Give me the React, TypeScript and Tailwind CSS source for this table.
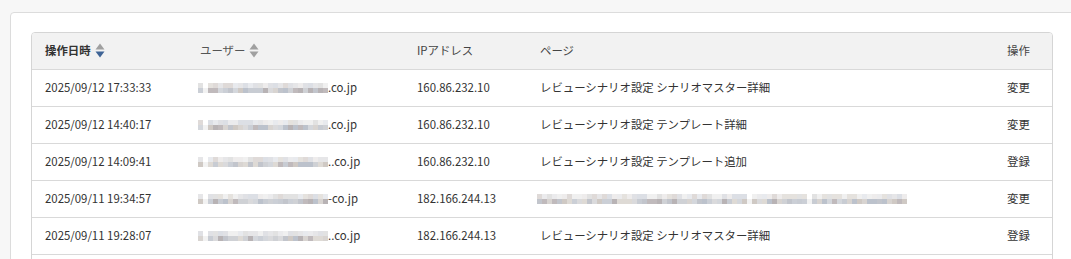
import React from "react";

const FONT = '"Noto Sans CJK JP", "Noto Sans", sans-serif';

const darkPal = ["#cfd1d5", "#c2c5cc", "#d8d4d1", "#b8b3b5", "#cbcfd6", "#dedad5", "#c8ccd3", "#d4d7dc", "#c0babc", "#dadadc", "#bcc2cc", "#cfc9c4"];
const lightPal = ["#e6e6e8", "#ebebed", "#e0e1e5", "#e5e2de", "#dcdfe5", "#eeecec", "#e2e2e2", "#e8eaee", "#dfdad8", "#f0f0f0"];

function rng(seed: number) {
  let s = seed;
  return () => {
    s = (s * 1103515245 + 12345) % 2147483648;
    return s / 2147483648;
  };
}

function Mosaic({ blocks, seed, gaps = [] }: { blocks: number; seed: number; gaps?: number[] }) {
  const r = rng(seed);
  const top: string[] = [];
  const bot: string[] = [];
  for (let i = 0; i < blocks; i++) {
    top.push(lightPal[Math.floor(r() * lightPal.length)]);
    bot.push(darkPal[Math.floor(r() * darkPal.length)]);
  }
  return (
    <span className="inline-flex flex-col align-middle">
      <span className="flex">
        {top.map((c, i) => (
          <span key={i} className="block h-[5px] w-[5px]" style={{ background: gaps.includes(i) ? "#ffffff" : c }} />
        ))}
      </span>
      <span className="flex">
        {bot.map((c, i) => (
          <span key={i} className="block h-[5px] w-[5px]" style={{ background: gaps.includes(i) ? "#f2f2f2" : c }} />
        ))}
      </span>
    </span>
  );
}

function SortIcon({ active }: { active?: boolean }) {
  return (
    <svg width="10" height="15" viewBox="0 0 10 15" className="ml-[4px] shrink-0">
      <path d="M5 0.5 L9.5 6.5 L0.5 6.5 Z" fill="#a0a0a0" />
      <path d="M0.5 8.5 L9.5 8.5 L5 14.5 Z" fill={active ? "#3f6496" : "#a0a0a0"} />
    </svg>
  );
}

type Row = { date: string; userSeed: number; userSuffix: string; ip: string; page: string | null; op: string };

const rows: Row[] = [
  { date: "2025/09/12 17:33:33", userSeed: 11, userSuffix: ".co.jp", ip: "160.86.232.10", page: "レビューシナリオ設定 シナリオマスター詳細", op: "変更" },
  { date: "2025/09/12 14:40:17", userSeed: 23, userSuffix: ".co.jp", ip: "160.86.232.10", page: "レビューシナリオ設定 テンプレート詳細", op: "変更" },
  { date: "2025/09/12 14:09:41", userSeed: 37, userSuffix: "..co.jp", ip: "160.86.232.10", page: "レビューシナリオ設定 テンプレート追加", op: "登録" },
  { date: "2025/09/11 19:34:57", userSeed: 41, userSuffix: "-co.jp", ip: "182.166.244.13", page: null, op: "変更" },
  { date: "2025/09/11 19:28:07", userSeed: 53, userSuffix: "..co.jp", ip: "182.166.244.13", page: "レビューシナリオ設定 シナリオマスター詳細", op: "登録" },
];

const grid = "grid grid-cols-[155px_217px_123px_1fr_58px] items-center";

export default function App() {
  return (
    <div className="h-[259px] w-[1071px] overflow-hidden bg-[#f7f7f7] pl-[10px] pt-[12px]" style={{ fontFamily: FONT }}>
      <div className="h-[300px] w-[1070px] rounded-[4px] border border-[#dcdcdc] bg-white pl-[20px] pt-[19px]">
        <div className="w-[1022px] overflow-hidden rounded-t-[4px] border border-[#d5d5d5] text-[11.4px] text-[#333333]">
          <div className={`${grid} h-[36px] bg-[#f2f2f2]`}>
            <div className="flex items-center pl-[13px] font-bold text-[#333]">
              操作日時
              <SortIcon active />
            </div>
            <div className="flex items-center pl-[13px] text-[#555]">
              ユーザー
              <SortIcon />
            </div>
            <div className="pl-[13px] text-[#444]">IPアドレス</div>
            <div className="pl-[13px] text-[#444]">ページ</div>
            <div className="pl-[13px] text-[#444]">操作</div>
          </div>
          {rows.map((r, i) => (
            <div key={i} className={`${grid} h-[37px] border-t border-[#d9d9d9]`}>
              <div className="pl-[13px]">{r.date}</div>
              <div className="flex items-center pl-[11px]">
                <Mosaic blocks={26} seed={r.userSeed} gaps={[1]} />
                <span>{r.userSuffix}</span>
              </div>
              <div className="pl-[13px]">{r.ip}</div>
              <div className="flex items-center pl-[10px]">
                {r.page ? <span className="pl-[3px]">{r.page}</span> : <Mosaic blocks={74} seed={97} gaps={[42, 54]} />}
              </div>
              <div className="pl-[13px]">{r.op}</div>
            </div>
          ))}
          <div className="h-[10px] border-t border-[#d9d9d9]" />
        </div>
      </div>
    </div>
  );
}
